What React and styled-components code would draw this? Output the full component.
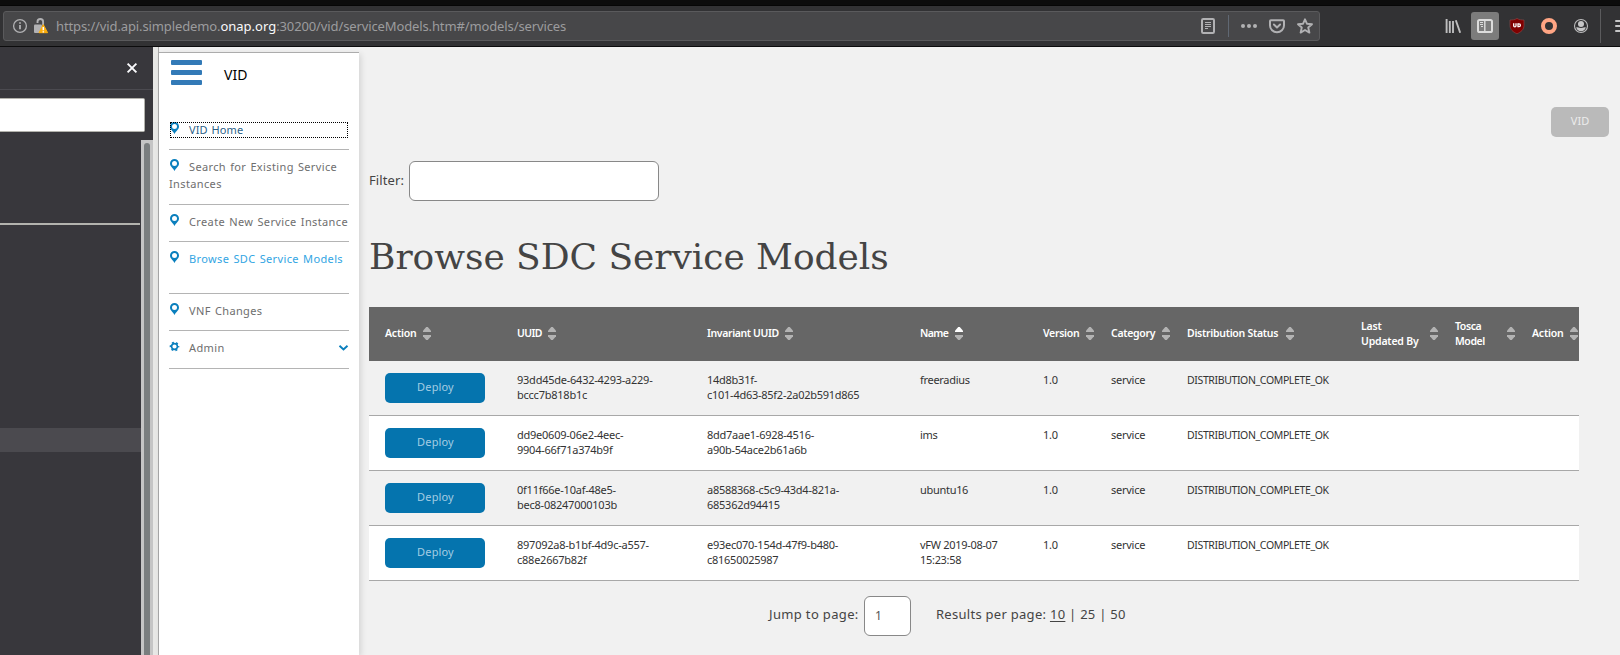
import React from 'react';
import styled, { createGlobalStyle, css } from 'styled-components';

const GlobalStyle = createGlobalStyle`
  * { box-sizing: border-box; }
  body {
    margin: 0;
    background: #f1f1f1;
    color: #444;
    font-family: "Noto Sans", "Open Sans", sans-serif;
    font-size: 12px;
    overflow: hidden;
  }
`;

const Window = styled.div`
  display: flex;
  flex-direction: column;
  width: 1620px;
  height: 655px;
  overflow: hidden;
`;

/* Browser toolbar */

const Toolbar = styled.header`
  display: flex;
  align-items: flex-start;
  flex: none;
  height: 47px;
  padding: 5px 0 0 3px;
  background: #323234;
  border-top: 5px solid #0c0c0c;
  border-bottom: 1px solid #0c0c0d;
  box-shadow: inset 0 1px 0 #060606;
`;

const AddressBar = styled.div`
  display: flex;
  flex: none;
  align-items: center;
  width: 1317px;
  height: 30px;
  margin-top: 1px;
  padding: 0 6px 0 8px;
  border: 1px solid #5a5a5c;
  border-radius: 3px;
  background: #474749;
  color: #b1b1b3;
`;

const Icon = styled.svg`
  display: block;
  flex: none;
  width: ${p => p.$w || 16}px;
  height: ${p => p.$h || 16}px;
  overflow: visible;
`;

const LockIcon = styled(Icon)`
  margin: 0 7px 0 5px;
`;

const Url = styled.span`
  flex: 1;
  font-size: 13px;
  letter-spacing: -0.12px;
  line-height: 18px;
  color: #9c9c9e;
  white-space: nowrap;
`;

const UrlDomain = styled.span`
  color: #f9f9fa;
  letter-spacing: 0;
`;

const AddressDivider = styled.i`
  width: 1px;
  height: 22px;
  margin: 0 12px;
  background: #606873;
`;

const AddressActions = styled.div`
  display: flex;
  gap: 12px;
`;

const ToolbarButtons = styled.div`
  display: flex;
  flex: none;
  align-items: center;
  height: 28px;
  margin: 2px 0 0 119px;
  gap: 4px;
`;

const ToolbarButton = styled.span`
  display: flex;
  align-items: center;
  justify-content: center;
  width: 28px;
  height: 28px;
  border-radius: 3px;
  background: ${p => (p.$active ? '#7c7c7c' : 'transparent')};
`;

const ToolbarDivider = styled.i`
  flex: none;
  width: 1px;
  height: 34px;
  margin: 0 10px 0 1px;
  background: #5b5b5d;
`;

/* Browser side panel */

const Body = styled.div`
  display: flex;
  flex: 1;
  min-height: 0;
`;

const SidePanel = styled.aside`
  display: flex;
  flex-direction: column;
  width: 153px;
  background: #38373c;
`;

const SidePanelHeader = styled.div`
  display: flex;
  align-items: center;
  justify-content: flex-end;
  height: 43px;
  padding: 0 16px 1px 0;
  border-bottom: 1px solid #4b4a50;
`;

const SidePanelSearch = styled.div`
  width: 145px;
  height: 34px;
  margin: 8px 0;
  border: 1px solid #b2b2ac;
  border-left: 0;
  border-radius: 0 2px 2px 0;
  background: #fff;
`;

const SidePanelList = styled.div`
  display: flex;
  flex: 1;
`;

const PanelRows = styled.div`
  flex: 1;
`;

const PanelSeparator = styled.div`
  height: 2px;
  width: 140px;
  margin-top: 83px;
  background: #b3b3ae;
`;

const SelectedRow = styled.div`
  height: 24px;
  margin-top: 203px;
  background: #4b4a4f;
`;

const ScrollTrack = styled.div`
  width: 12px;
  padding: 3px 3px 0;
  background: #c5c5c5;
`;

const ScrollThumb = styled.div`
  height: 100%;
  border-radius: 3px 3px 0 0;
  background: #7a7e7f;
`;

const Splitter = styled.div`
  width: 6px;
  background: #e8e8e6;
  border-right: 1px solid #a9a9a9;
`;

/* Application menu */

const Page = styled.div`
  display: flex;
  flex: 1;
`;

const Menu = styled.nav`
  width: 200px;
  margin-top: 5px;
  padding: 0 10px;
  border-top: 1px solid #acacac;
  background: #fff;
  box-shadow: 2px 2px 6px rgba(0, 0, 0, 0.12);
`;

const MenuHeader = styled.div`
  display: flex;
  align-items: flex-start;
  height: 60px;
  padding: 7px 0 0 2px;
`;

const Burger = styled.div`
  display: flex;
  flex-direction: column;
  gap: 5px;
  width: 31px;
  margin-right: 22px;
`;

const BurgerBar = styled.i`
  height: 5px;
  border-radius: 1px;
  background: #337ab7;
`;

const MenuTitle = styled.span`
  margin-top: 5px;
  font-size: 14px;
  line-height: 20px;
  color: #000;
`;

const MenuItem = styled.div`
  height: ${p => p.$height || 37}px;
  padding-top: 8px;
  border-bottom: 1px solid #b4b4b4;
`;

const MenuLink = styled.a`
  display: block;
  font-size: 11px;
  letter-spacing: 0.37px;
  word-spacing: 0.9px;
  line-height: 17px;
  white-space: pre-line;
  color: ${p => p.$color || '#6e6e6e'};
  ${p => p.$focused && css`
    height: 16px;
    margin: 1px 1px 0 1px;
    line-height: 14px;
    letter-spacing: 0.1px;
    outline: 1px dotted #000;
    outline-offset: -1px;
  `}
`;

const MenuIcon = styled(Icon)`
  display: inline-block;
  margin: 0 10px 0 ${p => (p.$tight ? 0 : 1)}px;
  vertical-align: 0;
`;

const Chevron = styled(Icon)`
  float: right;
  margin: 6px 1px 0 0;
`;

/* Main content */

const Content = styled.main`
  flex: 1;
  display: flex;
  flex-direction: column;
  padding: 60px 11px 0 10px;
`;

const AppButton = styled.button`
  align-self: flex-end;
  width: 58px;
  height: 30px;
  padding: 0 0 3px;
  border: 0;
  border-radius: 5px;
  background: #bababa;
  color: #ececec;
  font: 11px "Noto Sans", sans-serif;
`;

const FilterRow = styled.label`
  display: flex;
  align-items: center;
  gap: 5px;
  margin-top: 24px;
  font-size: 13px;
`;

const FilterLabel = styled.span`
  width: 35px;
  padding-bottom: 2px;
  letter-spacing: 0.1px;
  white-space: nowrap;
`;

const Field = styled.input`
  width: ${p => p.$width}px;
  height: 40px;
  padding: 0 10px 2px;
  border: 1px solid #888;
  border-radius: 6px;
  background: #fff;
  color: #555;
  font: 12px "Noto Sans", sans-serif;
`;

const Title = styled.h1`
  height: 48px;
  margin: 32px 0 26px;
  font: 400 36px/48px "DejaVu Serif", serif;
  letter-spacing: -0.04px;
  color: #444;
`;

const Table = styled.div`
  width: 1210px;
  overflow: hidden;
  font-size: 11px;
  line-height: 15px;
`;

const columnsGrid = css`
  display: grid;
  grid-template-columns: 132px 190px 213px 123px 68px 76px 174px 94px 77px 63px;
`;

const HeaderRow = styled.div`
  ${columnsGrid}
  align-items: center;
  height: 54px;
  padding-bottom: 1px;
  background: #666;
  color: #fff;
`;

const HeaderCell = styled.div`
  display: flex;
  align-items: center;
  padding-left: 16px;
  font-size: 10.5px;
  font-weight: 600;
  letter-spacing: ${p => p.$spacing}px;
`;

const HeaderLabel = styled.span`
  flex: none;
  width: ${p => p.$width}px;
  white-space: pre;
`;

const Row = styled.div`
  ${columnsGrid}
  height: 55px;
  border-bottom: 1px solid #a8a8a8;
  background: ${p => (p.$striped ? '#fff' : '#f1f1f1')};
  color: #333;
`;

const Cell = styled.div`
  padding: 11px 0 0 16px;
  white-space: pre;
  letter-spacing: ${p => p.$spacing || 0}px;
`;

const ActionCell = styled(Cell)`
  padding-top: 12px;
`;

const StatusCell = styled(Cell)`
  padding-top: 12px;
  font-size: 10.5px;
`;

const DeployButton = styled.button`
  display: block;
  width: 100px;
  height: 30px;
  padding: 0 0 3px 1px;
  border: 0;
  border-radius: 5px;
  background: #0574ae;
  color: #a3cde3;
  font: 11px "Noto Sans", sans-serif;
  letter-spacing: 0.15px;
`;

const Pager = styled.div`
  display: flex;
  align-items: center;
  margin: 15px 0 0 400px;
  font-size: 13px;
  letter-spacing: 0.35px;
  white-space: pre;
`;

const PagerLabel = styled.span`
  width: 95px;
  padding-bottom: 4px;
`;

const PageSizes = styled.span`
  margin-left: 25px;
  padding-bottom: 4px;
  letter-spacing: 0.28px;
`;

const CurrentSize = styled.span`
  text-decoration: underline;
  text-underline-offset: 2px;
`;

const InfoIcon = () => (
  <Icon viewBox="0 0 16 16" fill="none" stroke="#b1b1b3" strokeWidth="1.3">
    <circle cx="8" cy="8" r="6.4" />
    <path d="M8 7v4.3M8 4.2v1.6" strokeWidth="1.8" />
  </Icon>
);

const InsecureIcon = () => (
  <LockIcon viewBox="0 0 16 16">
    <path d="M4.5 5V3.8a2.8 2.8 0 0 1 5.6 0V7" fill="none" stroke="#b1b1b3" strokeWidth="1.9" />
    <rect x="1" y="6.5" width="8" height="8.5" rx="1" fill="#b1b1b3" />
    <path d="M10.3 6.6 14.6 14.7H6z" fill="#fdae0b" stroke="#fdae0b" strokeLinejoin="round" />
    <path d="M10.3 9v3.2M10.3 13.2v1.4" stroke="#fff" strokeWidth="1.5" />
  </LockIcon>
);

const ReaderIcon = () => (
  <Icon viewBox="0 0 16 16" fill="none" stroke="#b1b1b3">
    <rect x="2" y="1" width="12" height="14" rx="1.2" strokeWidth="2" />
    <path d="M5 4.5h6M5 6.5h6M5 8.5h6M5 10.5h3" />
  </Icon>
);

const DotsIcon = () => (
  <Icon viewBox="0 0 16 16" fill="#b1b1b3">
    <circle cx="2" cy="8" r="2" />
    <circle cx="8" cy="8" r="2" />
    <circle cx="14" cy="8" r="2" />
  </Icon>
);

const PocketIcon = () => (
  <Icon viewBox="0 0 16 16" fill="none" stroke="#b1b1b3" strokeWidth="2" strokeLinecap="round" strokeLinejoin="round">
    <path d="M1.9 2.2h12.2a.9.9 0 0 1 .9.9v4.4a7 6.7 0 0 1-14 0V3.1a.9.9 0 0 1 .9-.9z" />
    <path d="M4.9 6.5 8 9.4l3.1-2.9" />
  </Icon>
);

const StarIcon = () => (
  <Icon viewBox="0 0 16 16" fill="none" stroke="#b1b1b3" strokeWidth="1.9" strokeLinejoin="round">
    <path d="M8 1.3 9.9 5.7 15 6.2 11.2 9.5 12.4 14.6 8 12 3.6 14.6 4.8 9.5 1 6.2 6.1 5.7z" />
  </Icon>
);

const LibraryIcon = () => (
  <Icon viewBox="0 0 16 16" stroke="#bdbdbe" strokeWidth="1.9" fill="none">
    <path d="M1.6 1v14M4.8 3v12M8 3v12M10.8 2.2l4.4 12.6" />
  </Icon>
);

const SidebarIcon = () => (
  <Icon viewBox="0 0 16 16" fill="none" stroke="#dcdcdc">
    <rect x="1" y="2" width="14" height="12" rx="1.6" strokeWidth="2" />
    <path d="M7.8 2v12" strokeWidth="1.4" />
    <path d="M3 4.5h3M3 6.5h3M4 8.5h2" />
  </Icon>
);

const ShieldIcon = () => (
  <Icon viewBox="0 0 16 16">
    <path d="M8 .4C6 1.8 3.4 2 1 2v5.5c0 4 3 6.5 7 8.3 4-1.8 7-4.3 7-8.3V2C12.6 2 10 1.8 8 .4z" fill="#800000" stroke="#8d4a4a" strokeWidth=".6" />
    <path d="M4.7 5.3v2.4a1.15 1.15 0 0 0 2.3 0V5.3" fill="none" stroke="#fff" strokeWidth="1.3" />
    <path d="M9 5.9h1a1.4 1.4 0 0 1 0 2.8H9z" fill="none" stroke="#fff" strokeWidth="1.3" />
  </Icon>
);

const RingIcon = () => (
  <Icon viewBox="0 0 16 16">
    <circle cx="8" cy="8" r="6" fill="none" stroke="#ffa584" strokeWidth="4" />
  </Icon>
);

const AccountIcon = () => (
  <Icon viewBox="0 0 16 16">
    <circle cx="8" cy="8" r="6.5" fill="none" stroke="#bdbdbe" strokeWidth="1.1" />
    <circle cx="8" cy="6" r="3" fill="#c6c6c7" />
    <path d="M3.2 9.3C5 9.3 5.5 10 8 10s3-.7 4.8-.7C12.3 11.8 10.3 13.2 8 13.2S3.7 11.8 3.2 9.3z" fill="#c6c6c7" />
  </Icon>
);

const HamburgerIcon = () => (
  <Icon viewBox="0 0 16 16" stroke="#c6c6c7" strokeWidth="2" strokeLinecap="round">
    <path d="M1 3h14M1 8h14M1 13h14" />
  </Icon>
);

const CloseIcon = () => (
  <Icon $w={10} $h={10} viewBox="0 0 10 10" stroke="#fbfbfe" strokeWidth="1.9">
    <path d="M.6.6l8.8 8.8M9.4.6.6 9.4" />
  </Icon>
);

const PinIcon = ({ tight }) => (
  <MenuIcon $w={9} $h={12} $tight={tight} viewBox="0 0 9 12">
    <path d="M4.5 0A4.5 4.5 0 0 0 0 4.5C0 7.3 2.8 8.8 4.5 12 6.2 8.8 9 7.3 9 4.5A4.5 4.5 0 0 0 4.5 0zm0 2.1a2.5 2.5 0 1 1 0 5 2.5 2.5 0 0 1 0-5z" fill="#0a7fbd" fillRule="evenodd" />
  </MenuIcon>
);

const GearIcon = () => (
  <MenuIcon $w={9} $h={11} viewBox="0 0 10 12" fill="none" stroke="#0a7fbd">
    <circle cx="5" cy="6" r="3.2" strokeWidth="1.7" />
    <circle cx="5" cy="6" r="4.5" strokeWidth="1.7" strokeDasharray="2.2 2.512" strokeDashoffset="1.1" />
  </MenuIcon>
);

const ChevronIcon = () => (
  <Chevron $w={9} $h={6} viewBox="0 0 9 6" fill="none" stroke="#0a7fbd" strokeWidth="1.9">
    <path d="M.5.8 4.5 4.5 8.5.8" />
  </Chevron>
);

const SortIcon = ({ ascending }) => (
  <Icon $w={8} $h={13} viewBox="0 0 8 13" fill="#b3b3b3">
    <path d="M3.2 0h1.6L8 3.7V5H0V3.7z" fill={ascending ? '#fff' : '#b3b3b3'} />
    <path d="M3.2 13h1.6L8 9.3V8H0v1.3z" />
  </Icon>
);

const menu = [
  { text: 'VID Home', color: '#2b5f88', focused: true },
  { text: 'Search for Existing Service\nInstances', height: 55 },
  { text: 'Create New Service Instance' },
  { text: 'Browse SDC Service Models', color: '#32a5e3', height: 52 },
  { text: 'VNF Changes' },
];

const columns = [
  { label: 'Action', width: 38, spacing: -0.2 },
  { label: 'UUID', width: 31, spacing: -0.6 },
  { label: 'Invariant UUID', width: 78, spacing: -0.38 },
  { label: 'Name', width: 35, spacing: -0.6 },
  { label: 'Version', width: 43, spacing: -0.3 },
  { label: 'Category', width: 51, spacing: -0.3 },
  { label: 'Distribution Status', width: 99, spacing: -0.28 },
  { label: 'Last\nUpdated By', width: 69, spacing: -0.2 },
  { label: 'Tosca\nModel', width: 52, spacing: -0.4 },
  { label: 'Action', width: 38, spacing: -0.2 },
];

const models = [
  { uuid: '93dd45de-6432-4293-a229-\nbccc7b818b1c', invariant: '14d8b31f-\nc101-4d63-85f2-2a02b591d865', name: 'freeradius' },
  { uuid: 'dd9e0609-06e2-4eec-\n9904-66f71a374b9f', invariant: '8dd7aae1-6928-4516-\na90b-54ace2b61a6b', name: 'ims' },
  { uuid: '0f11f66e-10af-48e5-\nbec8-08247000103b', invariant: 'a8588368-c5c9-43d4-821a-\n685362d94415', name: 'ubuntu16' },
  { uuid: '897092a8-b1bf-4d9c-a557-\nc88e2667b82f', invariant: 'e93ec070-154d-47f9-b480-\nc81650025987', name: 'vFW 2019-08-07\n15:23:58' },
];

export default function App() {
  return (
    <Window>
      <GlobalStyle />
      <Toolbar>
        <AddressBar>
          <InfoIcon />
          <InsecureIcon />
          <Url>
            https://vid.api.simpledemo.<UrlDomain>onap.org</UrlDomain>:30200/vid/serviceModels.htm#/models/services
          </Url>
          <ReaderIcon />
          <AddressDivider />
          <AddressActions>
            <DotsIcon />
            <PocketIcon />
            <StarIcon />
          </AddressActions>
        </AddressBar>
        <ToolbarButtons>
          <ToolbarButton><LibraryIcon /></ToolbarButton>
          <ToolbarButton $active><SidebarIcon /></ToolbarButton>
          <ToolbarButton><ShieldIcon /></ToolbarButton>
          <ToolbarButton><RingIcon /></ToolbarButton>
          <ToolbarButton><AccountIcon /></ToolbarButton>
          <ToolbarDivider />
          <HamburgerIcon />
        </ToolbarButtons>
      </Toolbar>
      <Body>
        <SidePanel>
          <SidePanelHeader><CloseIcon /></SidePanelHeader>
          <SidePanelSearch />
          <SidePanelList>
            <PanelRows>
              <PanelSeparator />
              <SelectedRow />
            </PanelRows>
            <ScrollTrack><ScrollThumb /></ScrollTrack>
          </SidePanelList>
        </SidePanel>
        <Splitter />
        <Page>
          <Menu>
            <MenuHeader>
              <Burger><BurgerBar /><BurgerBar /><BurgerBar /></Burger>
              <MenuTitle>VID</MenuTitle>
            </MenuHeader>
            {menu.map(item => (
              <MenuItem key={item.text} $height={item.height}>
                <MenuLink $color={item.color} $focused={item.focused}>
                  <PinIcon tight={item.focused} />{item.text}
                </MenuLink>
              </MenuItem>
            ))}
            <MenuItem $height={38}>
              <MenuLink><ChevronIcon /><GearIcon />Admin</MenuLink>
            </MenuItem>
          </Menu>
          <Content>
            <AppButton>VID</AppButton>
            <FilterRow>
              <FilterLabel>Filter:</FilterLabel>
              <Field $width={250} />
            </FilterRow>
            <Title>Browse SDC Service Models</Title>
            <Table>
              <HeaderRow>
                {columns.map((column, i) => (
                  <HeaderCell key={i} $spacing={column.spacing}>
                    <HeaderLabel $width={column.width}>{column.label}</HeaderLabel>
                    <SortIcon ascending={column.label === 'Name'} />
                  </HeaderCell>
                ))}
              </HeaderRow>
              {models.map((model, i) => (
                <Row key={model.uuid} $striped={i % 2 === 1}>
                  <ActionCell><DeployButton>Deploy</DeployButton></ActionCell>
                  <Cell $spacing={-0.24}>{model.uuid}</Cell>
                  <Cell $spacing={-0.26}>{model.invariant}</Cell>
                  <Cell $spacing={-0.3}>{model.name}</Cell>
                  <Cell $spacing={-0.3}>1.0</Cell>
                  <Cell $spacing={-0.25}>service</Cell>
                  <StatusCell $spacing={-0.37}>DISTRIBUTION_COMPLETE_OK</StatusCell>
                </Row>
              ))}
            </Table>
            <Pager>
              <PagerLabel>Jump to page:</PagerLabel>
              <Field $width={47} defaultValue="1" />
              <PageSizes>Results per page: <CurrentSize>10</CurrentSize> | 25 | 50</PageSizes>
            </Pager>
          </Content>
        </Page>
      </Body>
    </Window>
  );
}
